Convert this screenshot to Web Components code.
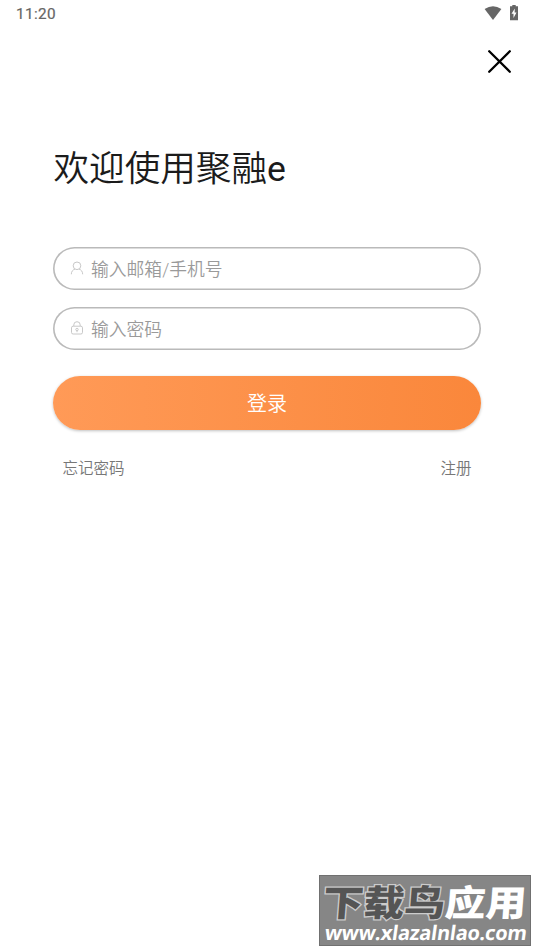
<!DOCTYPE html>
<html lang="zh-CN">
<head>
<meta charset="utf-8">
<title>聚融e</title>
<style>
body {
    margin: 0;
    background: #fff;
    font-family: Roboto, "Noto Sans CJK SC", sans-serif;
}
b {
    font-weight: 400;
}
</style>
</head>
<body>
<login-page>
	<status-bar slot="status" time="11:20"></status-bar>
	<close-button slot="close"></close-button>
	<span slot="title">欢迎使用聚融<b>e</b></span>
	<login-field icon="user">输入邮箱/手机号</login-field>
	<login-field icon="lock">输入密码</login-field>
	<login-button>登录</login-button>
	<login-links>
		<span slot="left">忘记密码</span>
		<span slot="right">注册</span>
	</login-links>
	<water-mark slot="mark">
		<span slot="dark">下载鸟</span>
		<span slot="light">应用</span>
		<span slot="site">www.xlazalnlao.com</span>
	</water-mark>
</login-page>

<script>
function attach(el, html) {
  const template = document.createElement('template');
  template.innerHTML = html;
  const root = el.attachShadow({ mode: 'open' });
  root.appendChild(template.content.cloneNode(true));
  return root;
}

class LoginPage extends HTMLElement {
  constructor() {
    super();
    attach(this, `
<style>
:host {
    display: flex;
    flex-direction: column;
    box-sizing: border-box;
    height: 950px;
    width: 534px;
    position: relative;
    overflow: hidden;
}
header {
    display: flex;
    justify-content: flex-end;
    padding: 21px 22px 0 0;
}
h1 {
    color: #1b1b1b;
    font-size: 35.6px;
    font-weight: 350;
    height: 52px;
    line-height: 52px;
    margin: 69px 53px 52px 53.5px;
}
main {
    display: flex;
    flex-direction: column;
    padding: 0 53px;
}
.mark {
    position: absolute;
    left: 319px;
    top: 875px;
}
</style>
<slot name="status"></slot>
<header><slot name="close"></slot></header>
<h1><slot name="title"></slot></h1>
<main><slot></slot></main>
<div class="mark"><slot name="mark"></slot></div>
`);
  }
}

class StatusBar extends HTMLElement {
  constructor() {
    super();
    const root = attach(this, `
<style>
:host {
    display: flex;
    align-items: center;
    box-sizing: border-box;
    color: #666;
    height: 28px;
    padding: 0 15px 0 16px;
}
time {
    flex: 1;
    font-size: 15.3px;
    letter-spacing: .35px;
    -webkit-text-stroke: .2px #666;
}
svg {
    display: block;
    height: 18px;
    margin-top: -2px;
    fill: #666;
}
</style>
<time></time>
<svg width="36" viewBox="0 0 36 18"><path d="M1.6 5Q10 -.4 18.4 5L10 16Z"/><path d="M27 2.3h2.3V1h3.4v1.3H35v13.9h-8Z"/><path d="M32 4.4l-3.3 5.3h2V14l3-5.6h-1.9Z" transform="translate(-.2 0)" fill="#fff"/></svg>
`);
    root.querySelector('time').textContent = this.getAttribute('time');
  }
}

class CloseButton extends HTMLElement {
  constructor() {
    super();
    attach(this, `
<style>
:host { display: block; height: 25px; width: 25px; }
svg { display: block; }
</style>
<svg width="25" height="25" viewBox="0 0 25 25"><path d="M2.2 2.2l20.6 20.6M22.8 2.2L2.2 22.8" stroke="#000" stroke-width="2.3" stroke-linecap="round"/></svg>
`);
  }
}

const icons = {
  user: '<circle cx="7" cy="4.8" r="3.8"/><path d="M1.3 13.3C1.3 10.4 3 8.6 5 8.1M9 8.1c2 .5 3.7 2.3 3.7 5.2"/>',
  lock: '<rect x="1.5" y="5.2" width="11" height="7.8" rx="1.6"/><path d="M3.8 5V3.9a3.2 3.2 0 0 1 6.4 0V5M7 9.8v1.4"/><circle cx="7" cy="8.5" r="1.2"/>'
};

class LoginField extends HTMLElement {
  constructor() {
    super();
    const root = attach(this, `
<style>
:host {
    display: flex;
    align-items: center;
    box-sizing: border-box;
    border-radius: 21.5px;
    box-shadow: inset 0 0 0 1.6px #bababa;
    color: #9a9a9a;
    font-size: 17.8px;
    font-weight: 350;
    height: 43px;
    line-height: 26px;
    margin-bottom: 17px;
    padding: 2px 0 0 17px;
}
svg {
    fill: none;
    margin: -3px 7px 0 0;
    stroke: #c8c8c8;
}
</style>
<svg width="14" height="14" viewBox="0 0 14 14"></svg>
<span><slot></slot></span>
`);
    root.querySelector('svg').innerHTML = icons[this.getAttribute('icon')];
  }
}

class LoginButton extends HTMLElement {
  constructor() {
    super();
    attach(this, `
<style>
:host {
    display: block;
    background: linear-gradient(90deg, #ff9a57, #fa873b);
    border-radius: 27px;
    box-shadow: 0 1px 3px rgba(0,0,0,.25);
    color: #fff;
    font-size: 20px;
    font-weight: 350;
    height: 54px;
    line-height: 56px;
    margin-top: 9px;
    text-align: center;
}
</style>
<slot></slot>
`);
  }
}

class LoginLinks extends HTMLElement {
  constructor() {
    super();
    attach(this, `
<style>
:host {
    display: flex;
    justify-content: space-between;
    color: #777;
    font-size: 15.5px;
    font-weight: 350;
    line-height: 24px;
    padding: 27px 9.5px 0 9.5px;
}
</style>
<slot name="left"></slot>
<slot name="right"></slot>
`);
  }
}

class WaterMark extends HTMLElement {
  constructor() {
    super();
    attach(this, `
<style>
:host {
    display: block;
    background: #868686;
    box-sizing: border-box;
    border: 1px solid #707070;
    height: 71px;
    overflow: hidden;
    width: 212px;
}
.name {
    display: flex;
    font-size: 36px;
    font-weight: 900;
    height: 36px;
    line-height: 36px;
    margin: 10px 0 0 3px;
    transform: scaleX(1.13) skewX(-4deg);
    transform-origin: 0 50%;
    white-space: nowrap;
}
.dark {
    color: #555;
    -webkit-text-stroke: 2.5px #ccc;
    paint-order: stroke fill;
}
.light { color: #fff; }
.site {
    color: #fff;
    font: 700 20px/20px "Open Sans", "Noto Sans", sans-serif;
    letter-spacing: -.25px;
    padding: 1px 0 0 5px;
    transform: skewX(-8deg);
    white-space: nowrap;
}
</style>
<div class="name"><span class="dark"><slot name="dark"></slot></span><span class="light"><slot name="light"></slot></span></div>
<div class="site"><slot name="site"></slot></div>
`);
  }
}

window.customElements.define('login-page', LoginPage);
window.customElements.define('status-bar', StatusBar);
window.customElements.define('close-button', CloseButton);
window.customElements.define('login-field', LoginField);
window.customElements.define('login-button', LoginButton);
window.customElements.define('login-links', LoginLinks);
window.customElements.define('water-mark', WaterMark);
</script>
</body>
</html>
